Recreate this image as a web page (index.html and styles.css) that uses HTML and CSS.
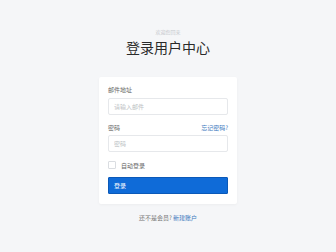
FILE: index.html
```html
<!DOCTYPE html>
<html>
<head>
    <title>登录用户中心</title>
    <link rel="stylesheet" href="styles.css">
</head>
<body>
    <div class="page">
        <div class="welcome">欢迎您回来</div>
        <h1>登录用户中心</h1>

        <form class="card">
            <label class="field-label">邮件地址</label>
            <input class="text-input" type="text" placeholder="请输入邮件">

            <div class="label-row">
                <label class="field-label">密码</label>
                <a class="forgot" href="#">忘记密码?</a>
            </div>
            <input class="text-input" type="password" placeholder="密码">

            <div class="remember">
                <span class="checkbox"></span>
                <span>自动登录</span>
            </div>

            <button class="submit" type="button">登录</button>
        </form>

        <div class="signup">还不是会员? <a href="#">新建账户</a></div>
    </div>
</body>
</html>
```

FILE: styles.css
```css
body {
    margin: 0;
    background: #f5f6f8;
    font-family: "Noto Sans CJK SC", "Noto Sans", sans-serif;
    color: #333;
}
.page {
    display: flex;
    flex-direction: column;
    align-items: center;
    padding-top: 28px;
}
.welcome {
    font-size: 5px;
    line-height: 8px;
    color: #c4c7cc;
}
h1 {
    font-size: 14px;
    font-weight: 400;
    line-height: 20px;
    margin: 1px 0 0;
    color: #2a2a2a;
}
.card {
    width: 120px;
    margin-top: 20px;
    padding: 9px 9px 10px;
    background: #fff;
    border-radius: 2px;
    box-shadow: 0 1px 3px rgba(0, 0, 0, 0.04);
    display: flex;
    flex-direction: column;
}
.field-label {
    display: block;
    font-size: 6px;
    line-height: 8px;
    color: #666;
    margin-bottom: 4px;
}
.label-row {
    display: flex;
    justify-content: space-between;
    align-items: center;
    margin-top: 9px;
}
.label-row .field-label {
    margin-bottom: 3px;
}
.forgot {
    font-size: 6px;
    line-height: 8px;
    color: #3a78bd;
    text-decoration: none;
    margin-bottom: 3px;
}
.text-input {
    box-sizing: border-box;
    width: 120px;
    height: 17px;
    margin: 0;
    padding: 0 5px;
    border: 1px solid #e6e8eb;
    border-radius: 2px;
    font-family: inherit;
    font-size: 6px;
    outline: none;
}
.text-input::placeholder {
    color: #bcbfc4;
}
.remember {
    display: flex;
    align-items: center;
    gap: 5px;
    margin-top: 9px;
    height: 8px;
    font-size: 6px;
    color: #666;
}
.checkbox {
    width: 6px;
    height: 6px;
    border: 1px solid #dadde1;
    border-radius: 1px;
    background: #fff;
}
.submit {
    margin-top: 8px;
    height: 17px;
    padding: 0 5px;
    text-align: left;
    border: 1px solid #0b59b8;
    border-radius: 1px;
    background: #0f6bd8;
    color: #fff;
    font-family: inherit;
    font-size: 6px;
}
.signup {
    margin-top: 10px;
    font-size: 6px;
    line-height: 8px;
    color: #777;
}
.signup a {
    color: #3a78bd;
    text-decoration: none;
}
```
